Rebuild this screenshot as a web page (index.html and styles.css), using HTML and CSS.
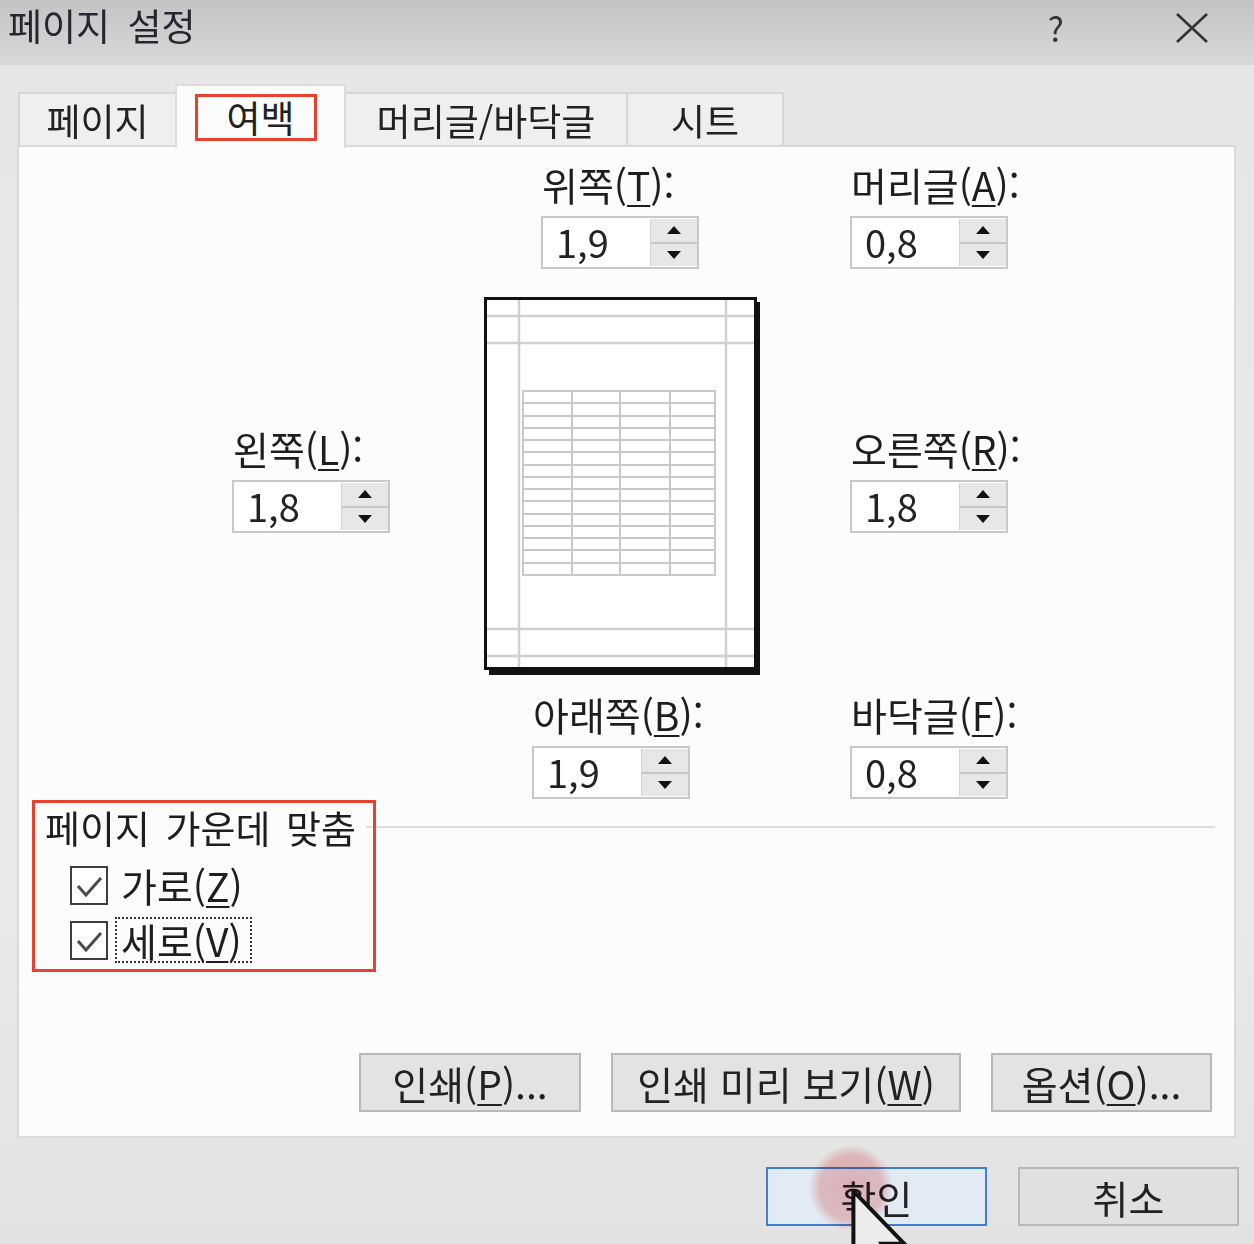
FILE: index.html
```html
<!DOCTYPE html>
<html lang="ko">
<head>
<meta charset="utf-8">
<title>페이지 설정</title>
<link rel="stylesheet" href="styles.css">
</head>
<body>
<div class="dialog">
  <header class="titlebar">
    <span class="title">페이지 설정</span>
    <span class="help">?</span>
    <svg class="close" viewBox="0 0 36 32" width="36" height="32"><path d="M3 2 L33 30 M33 2 L3 30" stroke="#333" stroke-width="2.6" fill="none"/></svg>
  </header>

  <nav class="tabs">
    <div class="tab t1">페이지</div>
    <div class="tab t2 active">여백<span class="mark mark-tab"></span></div>
    <div class="tab t3">머리글/바닥글</div>
    <div class="tab t4">시트</div>
  </nav>

  <section class="panel">
    <div class="margin-grid">
      <div class="field f-top">
        <div class="lbl">위쪽(<u>T</u>):</div>
        <div class="spin"><span class="spin-val">1,9</span><span class="spin-btns"><span class="up"></span><span class="down"></span></span></div>
      </div>
      <div class="field f-header">
        <div class="lbl">머리글(<u>A</u>):</div>
        <div class="spin"><span class="spin-val">0,8</span><span class="spin-btns"><span class="up"></span><span class="down"></span></span></div>
      </div>

      <div class="field f-left">
        <div class="lbl">왼쪽(<u>L</u>):</div>
        <div class="spin"><span class="spin-val">1,8</span><span class="spin-btns"><span class="up"></span><span class="down"></span></span></div>
      </div>
      <svg class="preview" width="276" height="379" viewBox="0 0 276 379">
        <rect x="5" y="6" width="271" height="373" fill="#111"/>
        <rect x="1.5" y="2.5" width="270" height="370" fill="#fff" stroke="#111" stroke-width="3"/>
        <g stroke="#d0d0d0" stroke-width="2.5">
          <line x1="35" y1="4" x2="35" y2="371"/>
          <line x1="242" y1="4" x2="242" y2="371"/>
          <line x1="3" y1="20" x2="270" y2="20"/>
          <line x1="3" y1="47" x2="270" y2="47"/>
          <line x1="3" y1="333" x2="270" y2="333"/>
          <line x1="3" y1="360" x2="270" y2="360"/>
        </g>
        <g stroke="#c8c8c8" stroke-width="2" fill="none">
          <rect x="39" y="95" width="192" height="184"/>
          <line x1="88" y1="95" x2="88" y2="279"/>
          <line x1="136" y1="95" x2="136" y2="279"/>
          <line x1="186" y1="95" x2="186" y2="279"/>
          <line x1="39" y1="107" x2="231" y2="107"/>
          <line x1="39" y1="120" x2="231" y2="120"/>
          <line x1="39" y1="132" x2="231" y2="132"/>
          <line x1="39" y1="144" x2="231" y2="144"/>
          <line x1="39" y1="156" x2="231" y2="156"/>
          <line x1="39" y1="169" x2="231" y2="169"/>
          <line x1="39" y1="181" x2="231" y2="181"/>
          <line x1="39" y1="193" x2="231" y2="193"/>
          <line x1="39" y1="205" x2="231" y2="205"/>
          <line x1="39" y1="218" x2="231" y2="218"/>
          <line x1="39" y1="230" x2="231" y2="230"/>
          <line x1="39" y1="242" x2="231" y2="242"/>
          <line x1="39" y1="254" x2="231" y2="254"/>
          <line x1="39" y1="267" x2="231" y2="267"/>
        </g>
      </svg>
      <div class="field f-right">
        <div class="lbl">오른쪽(<u>R</u>):</div>
        <div class="spin"><span class="spin-val">1,8</span><span class="spin-btns"><span class="up"></span><span class="down"></span></span></div>
      </div>

      <div class="field f-bottom">
        <div class="lbl">아래쪽(<u>B</u>):</div>
        <div class="spin"><span class="spin-val">1,9</span><span class="spin-btns"><span class="up"></span><span class="down"></span></span></div>
      </div>
      <div class="field f-footer">
        <div class="lbl">바닥글(<u>F</u>):</div>
        <div class="spin"><span class="spin-val">0,8</span><span class="spin-btns"><span class="up"></span><span class="down"></span></span></div>
      </div>
    </div>

    <div class="center-group">
      <div class="group-head">
        <span class="group-label">페이지 가운데 맞춤</span>
        <span class="group-line"></span>
      </div>
      <div class="checks">
        <label class="check">
          <span class="box"><svg viewBox="0 0 34 35" width="34" height="35"><path d="M6 18 L14 27 L29 10" stroke="#4a4a4a" stroke-width="3" fill="none"/></svg></span>
          <span class="check-text">가로(<u>Z</u>)</span>
        </label>
        <label class="check">
          <span class="box"><svg viewBox="0 0 34 35" width="34" height="35"><path d="M6 18 L14 27 L29 10" stroke="#4a4a4a" stroke-width="3" fill="none"/></svg></span>
          <span class="check-text focus">세로(<u>V</u>)</span>
        </label>
      </div>
      <span class="mark mark-group"></span>
    </div>

    <div class="panel-buttons">
      <button class="btn w-print">인쇄(<u>P</u>)...</button>
      <button class="btn w-preview">인쇄 미리 보기(<u>W</u>)</button>
      <button class="btn w-options">옵션(<u>O</u>)...</button>
    </div>
  </section>

  <div class="dialog-buttons">
    <button class="btn primary">확인</button>
    <button class="btn cancel">취소</button>
  </div>

  <span class="click-ring"></span>
  <svg class="cursor" width="56" height="90" viewBox="0 0 12.6 20.4"><path d="M0.5 0.5 V17 L4.3 13.3 L7 19.6 L9.4 18.6 L6.8 12.4 H12 Z" fill="#ececec" stroke="#111" stroke-width="0.9" stroke-linejoin="miter"/></svg>
</div>
</body>
</html>
```

FILE: styles.css
```css
* { box-sizing: border-box; }

body {
  margin: 0;
  width: 1254px;
  height: 1244px;
  overflow: hidden;
  font-family: "Noto Sans CJK KR", "Noto Sans", sans-serif;
  color: #1e1e1e;
  background: #e6e6e6;
}

.dialog {
  position: relative;
  width: 1254px;
  height: 1244px;
  background: linear-gradient(#e6e6e6, #eaeaea 70%, #e2e2e2);
}

/* title bar */
.titlebar {
  height: 65px;
  display: flex;
  align-items: flex-start;
  padding-left: 8px;
  background: linear-gradient(#c3c3c3, #d9d9d9);
}
.title {
  font-size: 37px;
  line-height: 50px;
  word-spacing: 7px;
  color: #262630;
}
.help {
  margin-left: auto;
  margin-right: 110px;
  font-size: 34px;
  line-height: 56px;
  color: #333;
}
.close {
  margin-top: 12px;
  margin-right: 44px;
}

/* tabs */
.tabs {
  height: 80px;
  display: flex;
  align-items: flex-end;
  padding-left: 18px;
}
.tab {
  height: 53px;
  border: 2px solid #d6d6d6;
  border-bottom: none;
  background: #efefef;
  display: flex;
  align-items: center;
  justify-content: center;
  font-size: 37px;
  line-height: 44px;
  color: #222;
}
.tab + .tab { margin-left: -2px; }
.t1 { width: 159px; }
.t2 { width: 171px; }
.t3 { width: 284px; }
.t4 { width: 158px; }
.tab.active {
  position: relative;
  z-index: 2;
  height: 64px;
  margin-bottom: -3px;
  background: #fcfcfc;
  border-color: #dcdcdc;
}

.mark {
  position: absolute;
  border: 3px solid #e8412f;
  pointer-events: none;
}
.mark-tab {
  left: 18px;
  top: 8px;
  width: 122px;
  height: 47px;
}

/* panel */
.panel {
  position: relative;
  margin-left: 17px;
  width: 1219px;
  height: 993px;
  border: 2px solid #d9d9d9;
  background: #fcfcfc;
  display: flex;
  flex-direction: column;
}

.margin-grid {
  display: grid;
  grid-template-columns: 213px 158px 94px 276px 90px 158px;
  padding-top: 15px;
  align-items: start;
}

.field {
  display: flex;
  flex-direction: column;
  align-items: flex-start;
  gap: 10px;
}
.lbl {
  font-size: 39px;
  line-height: 44px;
  white-space: nowrap;
  padding-left: 1px;
}
u {
  text-decoration: underline;
  text-decoration-thickness: 2px;
  text-underline-offset: 4px;
}

.spin {
  width: 158px;
  height: 53px;
  border: 2px solid #c8c8c8;
  background: #fff;
  display: flex;
}
.spin-val {
  flex: 1;
  padding-left: 13px;
  font-size: 38px;
  line-height: 48px;
  color: #222;
}
.spin-btns {
  width: 47px;
  margin: 1px 0;
  display: flex;
  flex-direction: column;
  background: #e7e7e7;
  border-left: 1px solid #d3d3d3;
}
.spin-btns span {
  flex: 1;
  display: flex;
  align-items: center;
  justify-content: center;
}
.spin-btns .up { border-bottom: 2px solid #c6c6c6; }
.spin-btns .up::before {
  content: "";
  border-left: 7px solid transparent;
  border-right: 7px solid transparent;
  border-bottom: 8px solid #111;
}
.spin-btns .down::before {
  content: "";
  border-left: 7px solid transparent;
  border-right: 7px solid transparent;
  border-top: 8px solid #111;
}

.f-top { grid-column: 4; grid-row: 1; margin-left: 57px; }
.f-header { grid-column: 6; grid-row: 1; }
.f-left { grid-column: 2; grid-row: 2; margin-top: 157px; }
.preview { grid-column: 4; grid-row: 2; margin-top: 27px; display: block; }
.f-right { grid-column: 6; grid-row: 2; margin-top: 157px; }
.f-bottom { grid-column: 4; grid-row: 3; margin-left: 48px; margin-top: 17px; }
.f-footer { grid-column: 6; grid-row: 3; margin-top: 17px; }

/* center group */
.center-group {
  position: relative;
  margin-top: 6px;
  padding-left: 26px;
  padding-right: 19px;
}
.group-head {
  display: flex;
  align-items: center;
  gap: 10px;
}
.group-label {
  font-size: 38px;
  line-height: 44px;
  word-spacing: 5px;
  white-space: nowrap;
}
.group-line {
  flex: 1;
  height: 2px;
  background: #dedede;
}
.checks {
  margin-top: 13px;
  padding-left: 25px;
  display: flex;
  flex-direction: column;
  gap: 9px;
}
.check {
  display: flex;
  align-items: center;
  height: 46px;
  gap: 7px;
}
.box {
  width: 38px;
  height: 39px;
  border: 2px solid #3e3e3e;
  background: #fff;
  display: block;
}
.box svg { display: block; }
.check-text {
  font-size: 39px;
  line-height: 42px;
  padding: 0 8px 0 4px;
  border: 2px dotted transparent;
}
.check-text.focus { border-color: #333; }
.mark-group {
  left: 13px;
  top: -5px;
  width: 344px;
  height: 172px;
}

/* buttons */
.btn {
  font-family: "Noto Sans CJK KR", "Noto Sans", sans-serif;
  font-size: 39px;
  line-height: 44px;
  color: #222;
  height: 59px;
  border: 2px solid #b9b9b9;
  background: #e3e3e3;
  display: flex;
  align-items: center;
  justify-content: center;
  padding: 0;
  margin: 0;
}
.panel-buttons {
  margin-top: auto;
  display: flex;
  justify-content: flex-end;
  gap: 30px;
  padding: 0 22px 24px 0;
}
.w-print { width: 222px; }
.w-preview { width: 350px; }
.w-options { width: 221px; }

.dialog-buttons {
  margin-top: 29px;
  display: flex;
  justify-content: flex-end;
  gap: 31px;
  padding-right: 15px;
}
.dialog-buttons .btn { width: 221px; }
.btn.primary {
  border-color: #3f7fd2;
  background: #e2eaf3;
}
.btn.cancel {
  background: #e0e0e0;
  border-color: #b7b7b7;
}

/* overlays */
.click-ring {
  position: absolute;
  left: 809px;
  top: 1145px;
  width: 84px;
  height: 86px;
  border-radius: 50%;
  background: radial-gradient(closest-side, rgba(240, 140, 140, 0.55), rgba(240, 140, 140, 0.45) 75%, rgba(240, 140, 140, 0) 100%);
  mix-blend-mode: multiply;
  pointer-events: none;
}
.cursor {
  position: absolute;
  left: 851px;
  top: 1189px;
}
```
